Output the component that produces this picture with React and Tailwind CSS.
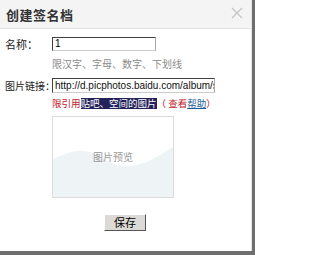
import React from "react";

const cjk = { fontFamily: '"Noto Sans CJK SC", "Liberation Sans", sans-serif' };

const App = () => {
  return (
    <div className="w-[255px] h-[255px] bg-white border-r-[3px] border-b-[4px] border-[#6e6e6e] flex flex-col overflow-hidden" style={cjk}>
      {/* Title bar */}
      <div className="h-[29px] shrink-0 bg-[#f4f4f4] border-b border-[#e2e2e2] border-r border-r-[#e4e4e4] flex items-center justify-between pl-[6px] pr-[8px]">
        <span className="text-[13px] font-bold text-[#333] leading-none tracking-[0.5px]">创建签名档</span>
        <svg width="12" height="12" viewBox="0 0 12 12" className="mt-[-2px]">
          <path d="M1 1L11 11M11 1L1 11" stroke="#c4c4c4" strokeWidth="1.2" />
        </svg>
      </div>

      {/* Body */}
      <div className="flex-1 border-r border-[#e4e4e4] pl-[5px]">
        {/* Name row */}
        <div className="flex items-center mt-[8px]">
          <span className="w-[47px] text-[11px] text-[#222] leading-none">名称：</span>
          <div className="w-[104px] h-[14px] border border-t-[#404040] border-l-[#404040] border-r-[#aaa] border-b-[#ccc] flex items-center pl-[2px]">
            <span className="text-[10px] leading-none text-black" style={{ fontFamily: '"Liberation Sans", sans-serif' }}>1</span>
          </div>
        </div>
        <div className="ml-[47px] mt-[8px] text-[10px] text-[#8a8a8a] leading-none">限汉字、字母、数字、下划线</div>

        {/* Link row */}
        <div className="flex items-center mt-[9px]">
          <span className="w-[47px] text-[10px] text-[#222] leading-none whitespace-nowrap">图片链接：</span>
          <div className="w-[163px] h-[15px] border border-t-[#404040] border-l-[#404040] border-r-[#aaa] border-b-[#ccc] flex items-center pl-[2px] overflow-hidden">
            <span className="text-[10px] leading-none text-[#111] whitespace-nowrap" style={{ fontFamily: '"Liberation Sans", sans-serif' }}>
              http://d.picphotos.baidu.com/album/s
            </span>
          </div>
        </div>
        <div className="ml-[47px] mt-[5px] flex items-center text-[9.5px] leading-[11px] whitespace-nowrap">
          <span className="text-[#c0182a]">限引用</span>
          <span className="bg-[#23225a] text-white">贴吧、空间的图片</span>
          <span className="text-[#c0182a]">（ 查看</span>
          <span className="text-[#1d5b9b] underline">帮助</span>
          <span className="text-[#c0182a]">）</span>
        </div>

        {/* Preview */}
        <div className="ml-[47px] mt-[7px] w-[122px] h-[82px] border border-[#dcdcdc] relative flex items-center justify-center">
          <svg className="absolute inset-0" width="120" height="80" viewBox="0 0 120 80">
            <path d="M0 42 C18 34 30 30 44 38 C58 46 66 52 84 48 C98 45 110 36 120 30 L120 80 L0 80 Z" fill="#eef3f5" />
          </svg>
          <span className="relative text-[10px] text-[#999] leading-none">图片预览</span>
        </div>

        {/* Save */}
        <div className="flex justify-center mt-[16px] pr-[6px]">
          <button className="w-[42px] h-[17px] bg-[#dcdad6] border border-t-white border-l-white border-r-[#555] border-b-[#555] text-[11px] text-black leading-none flex items-center justify-center">
            保存
          </button>
        </div>
      </div>
    </div>
  );
};

export default App;
